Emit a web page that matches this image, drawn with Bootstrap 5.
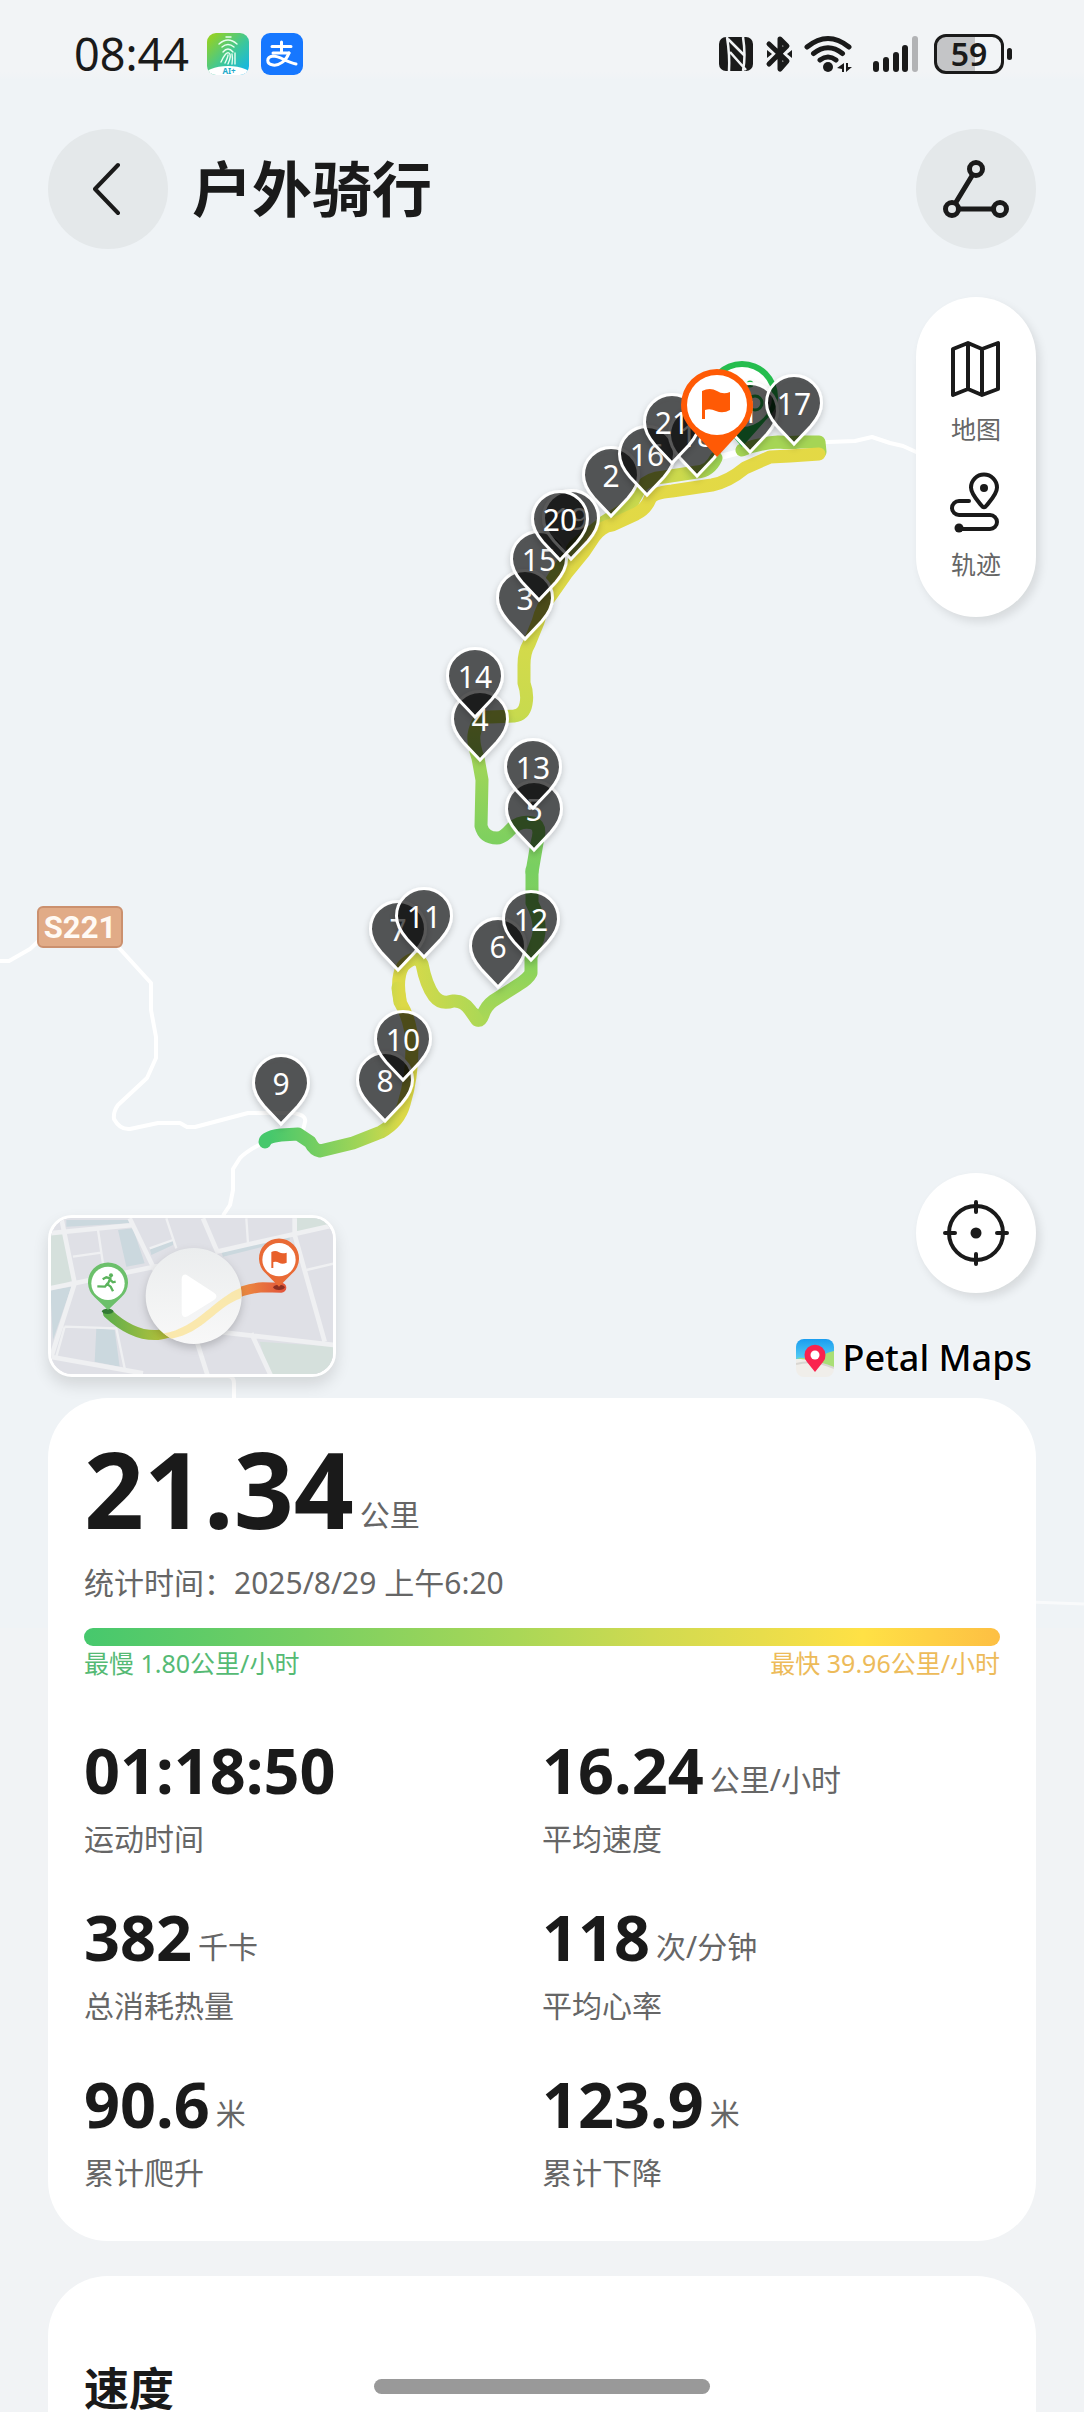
<!DOCTYPE html>
<html lang="zh-CN">
<head>
<meta charset="utf-8">
<meta name="viewport" content="width=device-width, initial-scale=1">
<title>户外骑行</title>
<link href="https://cdn.jsdelivr.net/npm/bootstrap@5.3.0/dist/css/bootstrap.min.css" rel="stylesheet">
<style>
  :root { --ink: #1a1a1a; --soft: #666; --edge: 48px; }
  body { font-family: "Noto Sans", "Noto Sans CJK SC", sans-serif; color: var(--ink); background: #f1f3f5; }
  .screen { min-height: 100vh; overflow: hidden; }
  .map-canvas { top: 0; left: 0; width: 100%; height: 1628px; background: #eff3f6; }
  .map-stage { min-height: 1398px; padding-bottom: 21px; }
  .status-bar { height: 108px; padding: 0 72px 0 74px; background: linear-gradient(#f2f4f6 72px, #f2f4f600 80px); }
  .clock { font-size: 45px; line-height: 60px; margin-right: 18px; }
  .battery { width: 70px; height: 40px; border: 3px solid var(--ink); border-radius: 12px; font-size: 32px; font-weight: 600; line-height: 34px;
    background: linear-gradient(90deg, #c4c5c7 59%, transparent 59%); }
  .battery-cap { width: 5px; height: 12px; border-radius: 3px; background: var(--ink); margin-left: 3px; }
  .title-bar { padding: 21px var(--edge) 0; }
  .page-title { font-size: 60px; line-height: 72px; font-weight: 700; }
  .round-btn { width: 120px; height: 120px; border-radius: 50%; border: 0; padding: 0; background: #e4e8ea; color: var(--ink); }
  .floating { background: #fff; box-shadow: 4px 5px 10px #0000001a; }
  .tool-row { padding: 48px var(--edge) 0; }
  .tool-panel { width: 120px; border-radius: 60px; padding: 41px 0 35px; }
  .tool-btn { border: 0; background: none; padding: 0; color: var(--soft); font-size: 25px; line-height: 36px; }
  .tool-btn svg { margin-bottom: 13px; }
  .map-foot { padding: 0 var(--edge); }
  .replay { width: 288px; height: 162px; border: 3px solid #fff; border-radius: 24px; overflow: hidden; padding: 0; box-shadow: 0 8px 16px #0000001f; background: #e3e5ea; }
  .foot-tools { gap: 46px; }
  .brand { font-size: 36px; line-height: 38px; font-weight: 500; color: #000; padding-right: 4px; gap: 8px;
    text-shadow: 0 0 3px #fff, 0 0 3px #fff, 0 0 2px #fff; }
  .panel { margin: 0 var(--edge); background: #fff; border-radius: 60px; padding: 38px 36px 47px; }
  .panel-next { margin-top: 35px; border-radius: 60px 60px 0 0; padding: 90px 36px 0; }
  .panel-title { font-size: 45px; line-height: 45px; font-weight: 700; }
  .distance { font-size: 105px; line-height: 106px; font-weight: 700; }
  .note { font-size: 30px; line-height: 42px; color: var(--soft); }
  .unit { font-size: 30px; line-height: 30px; color: var(--soft); vertical-align: 3px; margin-left: 6px; }
  .pace-bar { height: 18px; border-radius: 9px; margin-top: 24px;
    background: linear-gradient(90deg, #46c86d 0%, #77cf62 24%, #a9d757 47%, #d0da50 62%, #e8dd4b 74%, #ffe145 85%, #fdbf43 100%); }
  .pace-label { font-size: 25px; line-height: 34px; }
  .slow { color: #55ba74; }
  .fast { color: #edbb5a; }
  .metrics { margin-top: 58px; row-gap: 45px; }
  .value-line { height: 64px; }
  .hero-line { height: 106px; }
  .metric-value { font-size: 63px; line-height: 64px; font-weight: 700; }
  .metric-label { margin-top: 16px; }
  .home-bar { width: 336px; height: 15px; border-radius: 8px; background: #999; bottom: 18px; left: 50%; transform: translateX(-50%); }
  svg text { font-family: "Noto Sans", sans-serif; }
  .road-sign { font-family: Roboto, sans-serif; }
</style>
</head>
<body>
<div class="screen position-relative d-flex flex-column">

  <!-- Map layer: roads, coloured track, kilometre pins -->
  <svg class="map-canvas position-absolute" viewBox="0 0 1084 1628" preserveAspectRatio="xMidYMin slice" role="img" aria-label="轨迹地图">
    <defs>
      <path id="pin" d="M0-2L-17-20C-23-27-27.500-35-27.500-43A27.500 27.500 0 0 1 27.500-43C27.500-35 23-27 17-20Z" fill="#000" fill-opacity=".6" stroke="#fff" stroke-width="3" filter="url(#pinShadow)"/>
      <filter id="pinShadow" x="-30%" y="-20%" width="160%" height="150%"><feDropShadow dx="0" dy="3" stdDeviation="3" flood-color="#000" flood-opacity=".22"/></filter>
      <linearGradient id="g1" gradientUnits="userSpaceOnUse" x1="0" y1="440" x2="0" y2="870">
        <stop offset="0" stop-color="#e4d945"/><stop offset=".3" stop-color="#e0d946"/><stop offset=".5" stop-color="#d2da4b"/><stop offset=".64" stop-color="#c8da4e"/><stop offset=".74" stop-color="#a2d657"/><stop offset=".92" stop-color="#80d05f"/><stop offset="1" stop-color="#79cf61"/>
      </linearGradient>
      <linearGradient id="g2" gradientUnits="userSpaceOnUse" x1="0" y1="870" x2="0" y2="1025">
        <stop offset="0" stop-color="#79cf61"/><stop offset=".6" stop-color="#88d25c"/><stop offset="1" stop-color="#add855"/>
      </linearGradient>
      <linearGradient id="g3" gradientUnits="userSpaceOnUse" x1="479" y1="0" x2="400" y2="0">
        <stop offset="0" stop-color="#add855"/><stop offset="1" stop-color="#dcda48"/>
      </linearGradient>
      <linearGradient id="g4" gradientUnits="userSpaceOnUse" x1="270" y1="0" x2="402" y2="0">
        <stop offset="0" stop-color="#46c86c"/><stop offset=".35" stop-color="#75ce61"/><stop offset=".7" stop-color="#a4d556"/><stop offset="1" stop-color="#dcd947"/>
      </linearGradient>
      <linearGradient id="g5" gradientUnits="userSpaceOnUse" x1="600" y1="0" x2="716" y2="0">
        <stop offset="0" stop-color="#c6d94e"/><stop offset=".7" stop-color="#ccd94c"/><stop offset="1" stop-color="#9fd455"/>
      </linearGradient>
    </defs>

    <g fill="none" stroke="#fff" stroke-width="4" stroke-linejoin="round">
      <path d="M0 961H9L30 949 44 936"/>
      <path d="M110 938L151 983V1010L156 1037V1058L147 1078 118 1105Q113 1112 114 1119 120 1130 130 1129L158 1123H180L187 1127H195L248 1113H293Q307 1115 305 1122L302 1134"/>
      <path d="M265 1142Q248 1150 240 1158L233 1169V1190L230 1205 224 1214 215 1240M180 1376H228Q234 1376 234 1384V1400"/>
      <path d="M742 450L775 444 855 441 872 437 890 443 903 446 925 456"/>
      <path d="M1030 1602L1084 1604" stroke-width="3" stroke-opacity=".6"/>
      <path d="M716 458L748 450" stroke-width="6"/>
    </g>

    <g fill="none" stroke-width="13" stroke-linejoin="round" stroke-linecap="round">
      <path stroke="#a5d555" d="M742 450C752 446 764 443 778 442Q790 443 800 442L819 442 820 452"/>
      <path stroke="url(#g5)" d="M716 458Q710 471 697 472L664 477Q648 478 640 488L631 505 604 522 575 545 552 580"/>
      <path stroke="url(#g1)" d="M819 454L790 456 770 457 745 468Q728 482 712 485L672 491Q652 493 650 499 646 509 636 514L612 525Q602 526 594 537L584 552 566 574 552 594Q542 606 538 622L529 644Q524 652 524 665V683Q528 694 526 704 524 715 514 716L490 717Q477 716 474 735 473 744 478 758L482 780 481 826Q484 838 497 838 503 838 511 829 520 820 533 823 542 826 537 843L532 872"/>
      <path stroke="url(#g2)" d="M532 870V903Q542 922 538 938L531 957V973Q528 979 518 985L493 1001Q486 1006 483 1015 479 1026 474 1014"/>
      <path stroke="url(#g3)" d="M477 1020L470 1010Q463 1000 453 1001 441 1005 434 996 426 985 422 964 416 953 403 966 396 978 400 1000"/>
      <path stroke="url(#g4)" d="M398 988L400 1002Q412 1022 412 1047 412 1078 404 1104 399 1122 381 1132L353 1143 320 1151Q314 1150 310 1142L298 1134 281 1135Q265 1137 265 1142"/>
    </g>

    <g>
      <rect x="38" y="907" width="84" height="40" rx="5" fill="#e1ab87" stroke="#cb906e" stroke-width="2"/>
      <text class="road-sign" x="80" y="938" text-anchor="middle" font-size="31" font-weight="700" fill="#fffaf4">S221</text>
    </g>

    <!-- Start marker -->
    <g>
      <path d="M742 447L719 421C712 414 706 407 706 397A36 36 0 0 1 778 397C778 407 772 414 765 421Z" fill="#25bd4e"/>
      <circle cx="742" cy="397" r="30" fill="#fff"/>
      <g fill="none" stroke="#25bd4e" stroke-width="3"><circle cx="755" cy="403" r="7"/><circle cx="729" cy="403" r="7"/><path d="M730 402L738 392 746 400V408M738 392H750"/><circle cx="750" cy="384" r="2"/></g>
    </g>

    <g fill="#fff" font-size="30" text-anchor="middle">
      <g transform="translate(750 454)"><use href="#pin"/><text y="-31">1</text></g>
      <g transform="translate(611 518)"><use href="#pin"/><text y="-31">2</text></g>
      <g transform="translate(525 641)"><use href="#pin"/><text y="-31">3</text></g>
      <g transform="translate(480 762)"><use href="#pin"/><text y="-31">4</text></g>
      <g transform="translate(534 852)"><use href="#pin"/><text y="-31">5</text></g>
      <g transform="translate(498 989)"><use href="#pin"/><text y="-31">6</text></g>
      <g transform="translate(398 972)"><use href="#pin"/><text y="-31">7</text></g>
      <g transform="translate(385 1123)"><use href="#pin"/><text y="-31">8</text></g>
      <g transform="translate(281 1126)"><use href="#pin"/><text y="-31">9</text></g>
      <g transform="translate(403 1082)"><use href="#pin"/><text y="-31">10</text></g>
      <g transform="translate(424 959)"><use href="#pin"/><text y="-31">11</text></g>
      <g transform="translate(531 962)"><use href="#pin"/><text y="-31">12</text></g>
      <g transform="translate(533 810)"><use href="#pin"/><text y="-31">13</text></g>
      <g transform="translate(475 719)"><use href="#pin"/><text y="-31">14</text></g>
      <g transform="translate(539 602)"><use href="#pin"/><text y="-31">15</text></g>
      <g transform="translate(647 497)"><use href="#pin"/><text y="-31">16</text></g>
      <g transform="translate(794 446)"><use href="#pin"/><text y="-31">17</text></g>
      <g transform="translate(697 478)"><use href="#pin"/><text y="-31">18</text></g>
      <g transform="translate(571 561)"><use href="#pin"/><text y="-31">19</text></g>
      <g transform="translate(560 562)"><use href="#pin"/><text y="-31">20</text></g>
      <g transform="translate(672 465)"><use href="#pin"/><text y="-31">21</text></g>
    </g>

    <!-- Finish marker -->
    <g>
      <path d="M717 457L693 431C686 424 681 415 681 405A36 36 0 0 1 753 405C753 415 748 424 741 431Z" fill="#ff5a05"/>
      <circle cx="717" cy="405" r="30" fill="#fff"/>
      <path d="M702 391Q710 387 717 391 723 395 730 392V410Q723 414 716 411 710 408 705 410V419H702Z" fill="#ff5a05"/>
    </g>
  </svg>

  <div class="map-stage position-relative d-flex flex-column">
    <header>
      <div class="status-bar d-flex align-items-center">
        <span class="clock">08:44</span>
        <svg class="me-2" width="42" height="42" viewBox="0 0 42 42" aria-hidden="true">
          <defs><linearGradient id="fp" x1="0" y1="0" x2="1" y2="1"><stop offset=".1" stop-color="#8fd12a"/><stop offset=".55" stop-color="#3cc79a"/><stop offset="1" stop-color="#0db2f5"/></linearGradient><clipPath id="fpc"><rect width="42" height="42" rx="9"/></clipPath></defs>
          <g clip-path="url(#fpc)"><rect width="42" height="42" fill="url(#fp)"/><ellipse cx="21" cy="43" rx="24" ry="10" fill="#fff"/></g>
          <g fill="none" stroke="#e8fff0" stroke-width="1.400" stroke-linecap="round"><path d="M19 4H24M12 11Q21 3 30 11M15 14Q21 9 27 14M16 19Q21 13 26 19M14 29Q19 18 22 20T21 31M18 30Q21 24 21 22M25 31Q26 25 25 21M28 31V20"/></g>
          <text x="22" y="41" text-anchor="middle" font-size="8" font-weight="700" fill="#21aacb">AI+</text>
        </svg>
        <svg class="ms-1" width="42" height="42" viewBox="0 0 42 42" aria-hidden="true">
          <rect width="42" height="42" rx="9" fill="#1677ff"/>
          <g fill="none" stroke="#fff" stroke-linecap="round"><path stroke-width="3" d="M11 13.500H30M20.500 9V19M12 20H28"/><path stroke-width="3" d="M28 20C25 28 18 33 12 32 5 31 5 24 12 23 19 23 25 29 35 31"/></g>
        </svg>
        <div class="ms-auto d-flex align-items-center">
          <svg width="200" height="40" viewBox="718 36 200 40" fill="#1a1a1a" aria-label="NFC、蓝牙、无线网络、信号">
            <rect x="719" y="39" width="34" height="34" rx="7"/>
            <path d="M727 39Q730 58 729 73M743 39Q746 58 743 73M728 41L744 57M730 54L746 72" stroke="#f1f3f5" stroke-width="2.500" fill="none"/>
            <g fill="none" stroke="#1a1a1a" stroke-width="5" stroke-linecap="round" stroke-linejoin="round"><path d="M769 46L787 63 780 71V41L787 48 769 66"/></g>
            <path d="M767 52L772 56 767 60ZM792 52L787 56 792 60Z"/>
            <g fill="none" stroke="#1a1a1a" stroke-width="5" stroke-linecap="round"><path d="M807 49Q828 32 849 49M813.500 55.500Q828 44 842.500 55.500M820 62Q828 56 836 62"/></g>
            <circle cx="828" cy="69" r="5"/><path d="M837 70L844 65V74H842V71ZM846 65H848V69H852L846 74Z"/>
            <rect x="873" y="63" width="6" height="11" rx="3"/><rect x="883" y="59" width="6" height="15" rx="3"/><rect x="893" y="54" width="6" height="20" rx="3"/><rect x="902" y="47" width="6" height="27" rx="3"/><rect x="912" y="38" width="6" height="36" rx="3" fill="#b2b3b5"/>
          </svg>
          <div class="battery text-center ms-3">59</div><div class="battery-cap"></div>
        </div>
      </div>

      <div class="title-bar d-flex align-items-center">
        <button class="round-btn me-4 d-flex align-items-center justify-content-center" type="button" aria-label="返回">
          <svg width="30" height="54" viewBox="2 0 30 54" fill="none" stroke="currentColor" stroke-width="4" stroke-linecap="round" stroke-linejoin="round"><path d="M27 3L4 27 27 51"/></svg>
        </button>
        <h1 class="page-title mb-0">户外骑行</h1>
        <button class="round-btn ms-auto d-flex align-items-center justify-content-center" type="button" aria-label="分享">
          <svg width="68" height="60" viewBox="0 0 68 60" fill="none" stroke="currentColor" stroke-width="5"><circle cx="34" cy="10" r="6.500"/><circle cx="10" cy="50" r="6.500"/><circle cx="58" cy="50" r="6.500"/><path d="M30.500 16L13.500 44M17 50H51"/></svg>
        </button>
      </div>
    </header>

    <div class="tool-row d-flex justify-content-end">
      <div class="tool-panel floating d-flex flex-column align-items-center gap-4">
        <button class="tool-btn d-flex flex-column align-items-center" type="button">
          <svg width="52" height="60" viewBox="0 0 52 60" fill="none" stroke="#1a1a1a" stroke-width="4" stroke-linejoin="round"><path d="M3 11L18 5 32 11 48 5V51L32 57 18 51 3 57ZM18 5V51M32 11V57"/></svg>
          地图
        </button>
        <button class="tool-btn d-flex flex-column align-items-center" type="button">
          <svg width="52" height="62" viewBox="0 0 52 62" fill="none" stroke="#1a1a1a" stroke-width="4" stroke-linejoin="round" stroke-linecap="round"><path d="M31.500 34.500C27 29 21 23 21 16.500A13 13 0 0 1 47 16.500C47 23 41 29 36.500 34.500Q34 38 31.500 34.500Z"/><path d="M19 30H9A7 7 0 0 0 9 44H40A7 7 0 0 1 40 58H10"/><circle cx="34" cy="17" r="4" fill="#1a1a1a" stroke="none"/><circle cx="9" cy="57" r="4.500" fill="#1a1a1a" stroke="none"/></svg>
          轨迹
        </button>
      </div>
    </div>

    <div class="map-foot mt-auto d-flex align-items-end justify-content-between">
      <button class="replay" type="button" aria-label="播放轨迹回放">
        <svg class="d-block w-100 h-100" viewBox="64 114 846 468" preserveAspectRatio="xMidYMid slice">
          <defs>
            <linearGradient id="trk" gradientUnits="userSpaceOnUse" x1="230" y1="0" x2="760" y2="0"><stop offset="0" stop-color="#5fae4c"/><stop offset=".3" stop-color="#adc03c"/><stop offset=".5" stop-color="#f2cf4a"/><stop offset=".75" stop-color="#ee9040"/><stop offset="1" stop-color="#e2573c"/></linearGradient>
            <linearGradient id="disc" x1="0" y1="0" x2="0" y2="1"><stop offset="0" stop-color="#ebedee"/><stop offset="1" stop-color="#f8f8f8"/></linearGradient>
            <filter id="blur"><feGaussianBlur stdDeviation="12"/></filter>
          </defs>
          <rect x="55" y="105" width="864" height="486" fill="#dfe0e6"/>
          <path d="M60 165L100 160 130 300 62 330ZM800 110H915V135L800 165ZM690 485L915 500V590H720Z" fill="#d5e0dc"/>
          <path d="M265 150L310 145 345 250 290 260ZM62 330L125 320 70 480ZM200 445L255 450 270 560 195 545ZM110 120H300V130L110 140ZM360 205L430 180V195L365 225ZM575 215L780 170V180L580 230Z" fill="#cbd8de"/>
          <g stroke="#eff0f2" fill="none"><path stroke-width="14" d="M60 160L310 135M95 115L135 310M300 115L375 270M60 325L400 255M135 310L65 530M60 530L340 580M560 215L915 135M520 115L565 220M795 115V165L885 485M560 455L915 495M665 460L725 590M500 480L535 590"/><path stroke-width="7" d="M205 150L225 285M130 230L215 218M410 115L440 205M360 205L430 180M650 115L655 190M830 270L915 250M105 440L260 445 285 565M105 440L80 530"/></g>
          <path d="M235 400Q310 470 385 465C500 450 560 330 700 322L755 323" fill="none" stroke="url(#trk)" stroke-width="30" stroke-linecap="round"/>
          <circle cx="492" cy="360" r="144" fill="#00000030" filter="url(#blur)"/>
          <circle cx="492" cy="348" r="144" fill="url(#disc)"/>
          <path d="M402 460C500 445 560 350 634 323L634 355C560 380 520 460 425 476Z" fill="#fae5a0" opacity=".85"/>
          <path d="M470 284Q456 282 456 298V398Q458 416 474 409L553 360Q568 348 553 338Z" fill="#fff"/>
          <g><ellipse cx="234" cy="394" rx="17" ry="8" fill="#337a35"/><path d="M235 390L195 352A60 60 0 1 1 275 352Z" fill="#6cc06b"/><circle cx="235" cy="310" r="50" fill="#fff"/><circle cx="244" cy="286" r="6" fill="#5bb35c"/><path d="M219 298L230 292 242 295 234 313 243 320 250 334M234 310L226 320 203 319M242 300L250 307 258 305" fill="none" stroke="#5bb35c" stroke-width="7"/></g>
          <g><ellipse cx="748" cy="322" rx="17" ry="8" fill="#8d2f22"/><path d="M748 320L708 280A60 60 0 1 1 788 280Z" fill="#e96a35"/><circle cx="748" cy="239" r="50" fill="#fff"/><path d="M725 216Q738 209 748 217 758 222 771 218V248Q758 254 748 248 740 243 731 246V264H725Z" fill="#e8602b"/></g>
        </svg>
      </button>
      <div class="foot-tools d-flex flex-column align-items-end">
        <button class="round-btn floating d-flex align-items-center justify-content-center" type="button" aria-label="定位">
          <svg width="66" height="66" viewBox="0 0 66 66" fill="none" stroke="#1a1a1a" stroke-width="4" stroke-linecap="round"><circle cx="33" cy="33" r="27"/><path d="M33 2V12M33 54V64M2 33H12M54 33H64"/><circle cx="33" cy="33" r="5.500" fill="#1a1a1a" stroke="none"/></svg>
        </button>
        <div class="brand d-flex align-items-center">
          <svg width="38" height="38" viewBox="0 0 38 38" aria-hidden="true"><defs><clipPath id="pm"><rect width="38" height="38" rx="8"/></clipPath><linearGradient id="sky" x1="0" y1="0" x2="0" y2="1"><stop offset="0" stop-color="#1a9df0"/><stop offset="1" stop-color="#55cdf3"/></linearGradient></defs><g clip-path="url(#pm)"><rect width="38" height="38" fill="#f0eeea"/><rect width="38" height="20" fill="url(#sky)"/><path d="M0 19Q10 18 18 22T38 28V12Q28 14 22 20 10 22 0 19Z" fill="#a9df76"/><path d="M0 25Q18 20 38 29" fill="none" stroke="#d8d6d2" stroke-width="2"/></g><path d="M19 33L11 23A10.500 10.500 0 1 1 27 23Z" fill="#f9234f"/><circle cx="19" cy="16" r="4.500" fill="#fff"/></svg>
          Petal Maps
        </div>
      </div>
    </div>
  </div>

  <main class="position-relative flex-grow-1 d-flex flex-column">
    <section class="panel">
      <div class="hero-line"><span class="distance">21.34</span><span class="unit">公里</span></div>
      <div class="note mt-3 pt-1">统计时间：2025/8/29 上午6:20</div>
      <div class="pace-bar"></div>
      <div class="d-flex justify-content-between pace-label"><span class="slow">最慢 1.80公里/小时</span><span class="fast">最快 39.96公里/小时</span></div>
      <div class="row g-0 metrics">
        <div class="col-6"><div class="value-line"><span class="metric-value">01:18:50</span></div><div class="note metric-label">运动时间</div></div>
        <div class="col-6"><div class="value-line"><span class="metric-value">16.24</span><span class="unit">公里/小时</span></div><div class="note metric-label">平均速度</div></div>
        <div class="col-6"><div class="value-line"><span class="metric-value">382</span><span class="unit">千卡</span></div><div class="note metric-label">总消耗热量</div></div>
        <div class="col-6"><div class="value-line"><span class="metric-value">118</span><span class="unit">次/分钟</span></div><div class="note metric-label">平均心率</div></div>
        <div class="col-6"><div class="value-line"><span class="metric-value">90.6</span><span class="unit">米</span></div><div class="note metric-label">累计爬升</div></div>
        <div class="col-6"><div class="value-line"><span class="metric-value">123.9</span><span class="unit">米</span></div><div class="note metric-label">累计下降</div></div>
      </div>
    </section>
    <section class="panel panel-next flex-grow-1"><h2 class="panel-title mb-0">速度</h2></section>
  </main>

  <div class="home-bar position-absolute"></div>
</div>
<script src="https://cdn.jsdelivr.net/npm/bootstrap@5.3.0/dist/js/bootstrap.bundle.min.js"></script>
</body>
</html>
